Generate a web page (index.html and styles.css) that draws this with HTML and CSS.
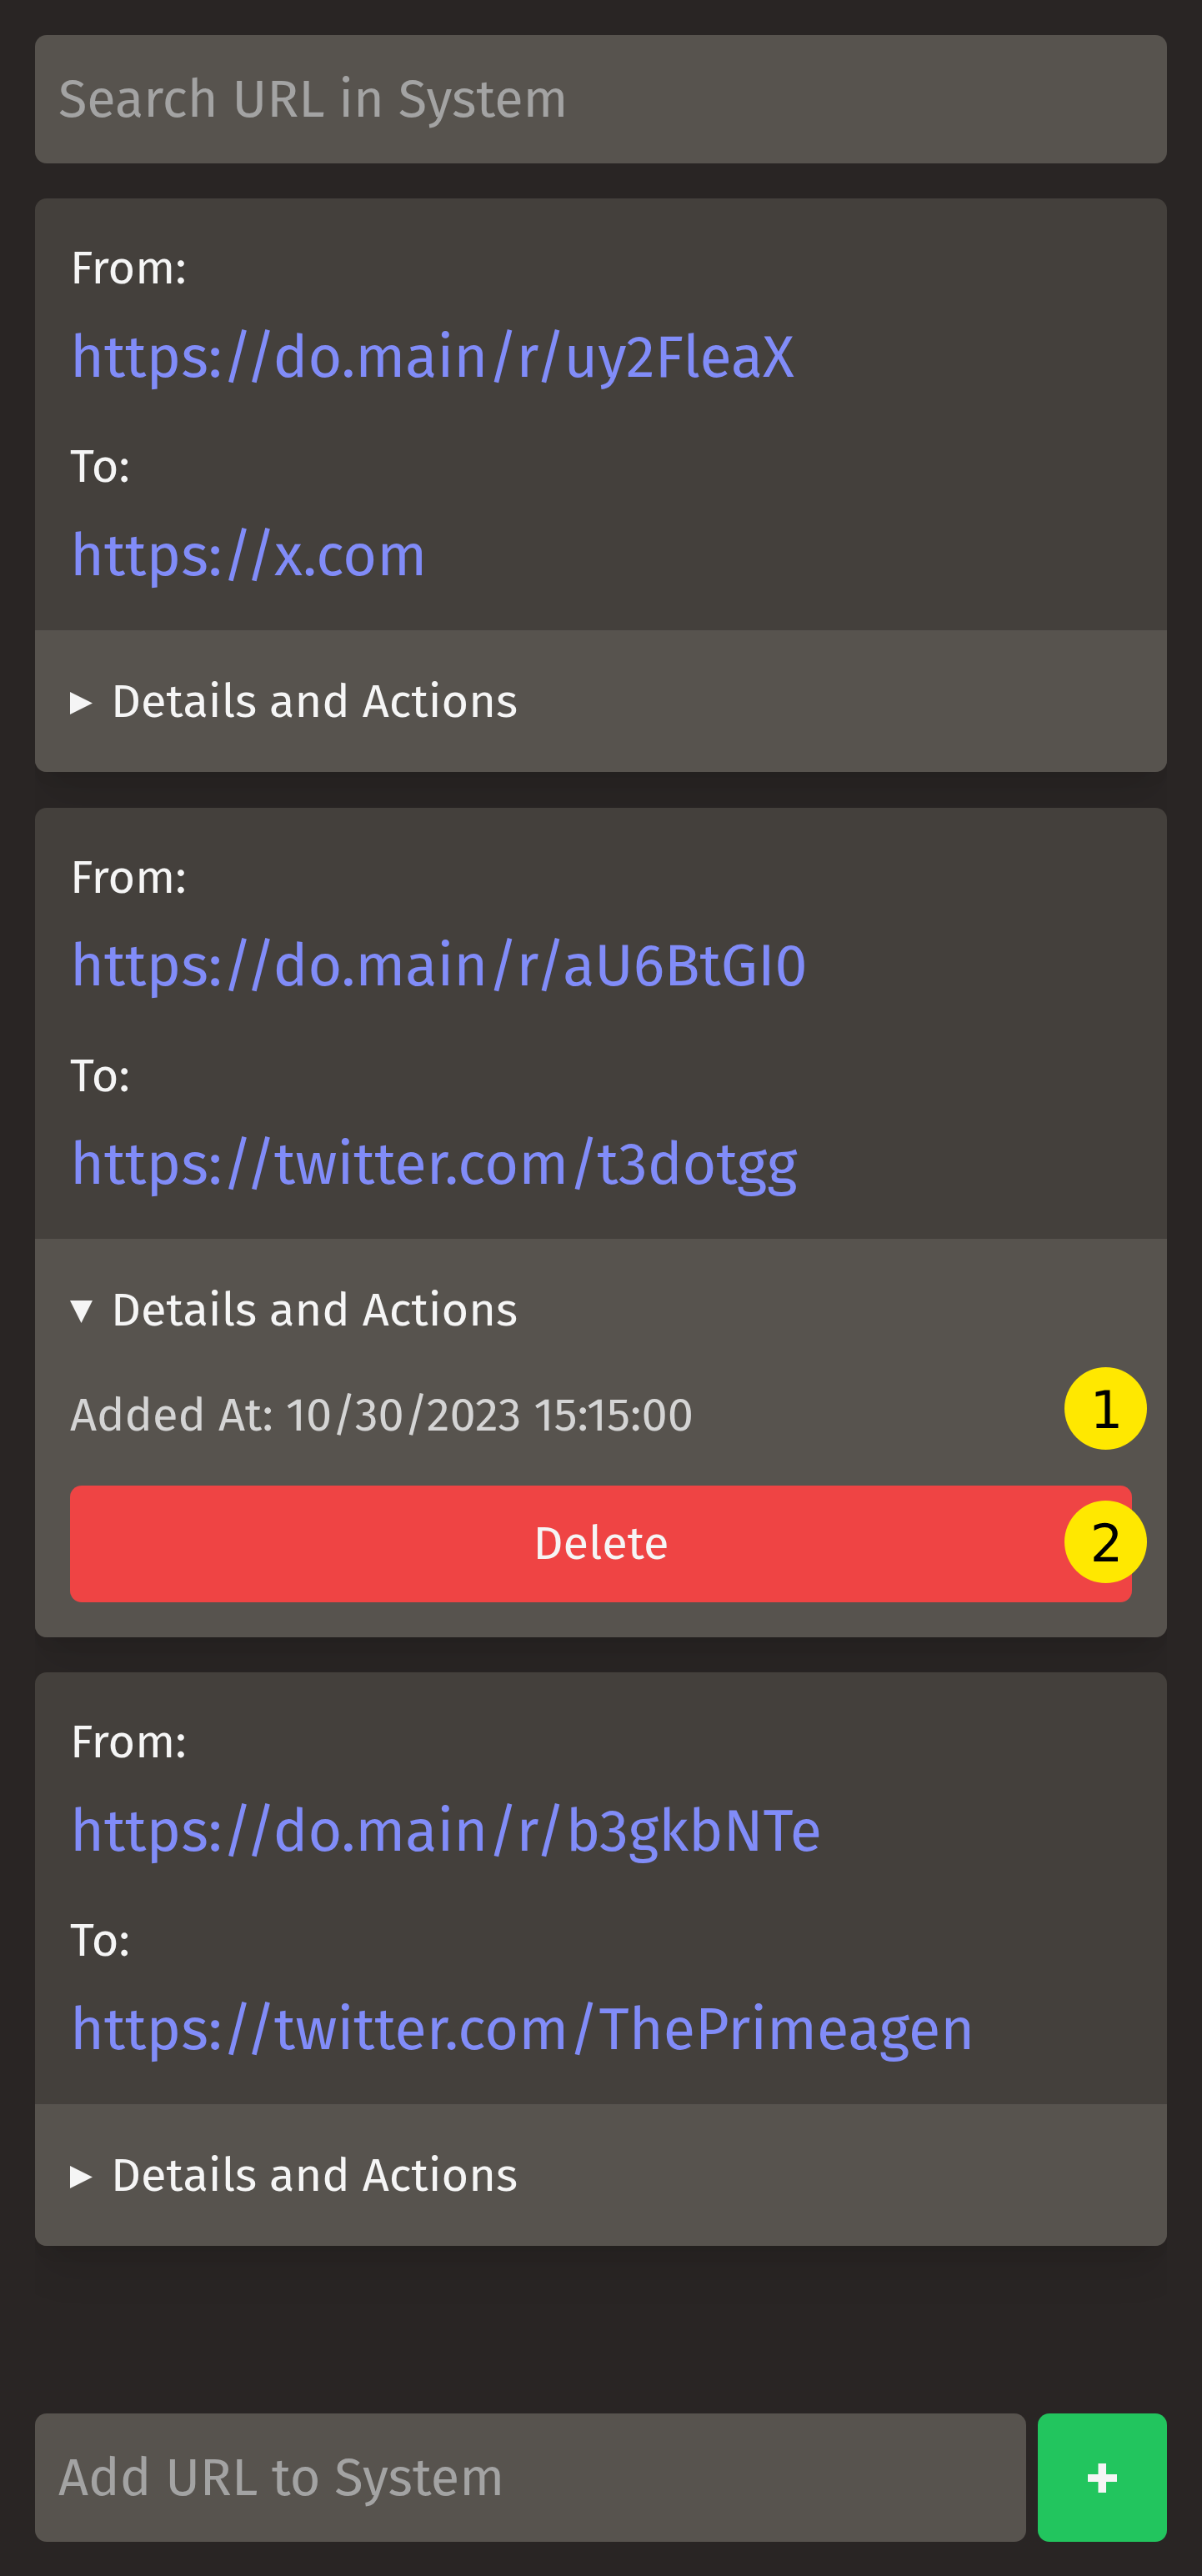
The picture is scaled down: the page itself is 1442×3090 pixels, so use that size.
FILE: index.html
```html
<!DOCTYPE html>
<html lang="en">
<head>
<meta charset="utf-8">
<title>URL System</title>
<link rel="stylesheet" href="styles.css">
</head>
<body>
<main class="app">
  <input class="field" type="text" placeholder="Search URL in System">

  <section class="list">
    <article class="card">
      <div class="card-body">
        <div class="entry"><p class="label">From:</p><a class="link">https://do.main/r/uy2FleaX</a></div>
        <div class="entry"><p class="label">To:</p><a class="link">https://x.com</a></div>
      </div>
      <div class="details">
        <div class="summary">
          <svg class="marker" viewBox="0 0 27 27"><path d="M0 0L27 13.5L0 27Z"/></svg>
          <span>Details and Actions</span>
        </div>
      </div>
    </article>

    <article class="card card-open">
      <div class="card-body">
        <div class="entry"><p class="label">From:</p><a class="link">https://do.main/r/aU6BtGI0</a></div>
        <div class="entry"><p class="label">To:</p><a class="link">https://twitter.com/t3dotgg</a></div>
      </div>
      <div class="details">
        <div class="summary">
          <svg class="marker" viewBox="0 0 27 27"><path d="M0 0H27L13.5 27Z"/></svg>
          <span>Details and Actions</span>
        </div>
        <p class="added">Added At: 10/30/2023 15:15:00</p>
        <button class="delete">Delete</button>
        <span class="badge badge-one">1</span>
        <span class="badge badge-two">2</span>
      </div>
    </article>

    <article class="card">
      <div class="card-body">
        <div class="entry"><p class="label">From:</p><a class="link">https://do.main/r/b3gkbNTe</a></div>
        <div class="entry"><p class="label">To:</p><a class="link">https://twitter.com/ThePrimeagen</a></div>
      </div>
      <div class="details">
        <div class="summary">
          <svg class="marker" viewBox="0 0 27 27"><path d="M0 0L27 13.5L0 27Z"/></svg>
          <span>Details and Actions</span>
        </div>
      </div>
    </article>
  </section>

  <form class="add-row">
    <input class="field" type="text" placeholder="Add URL to System">
    <button class="add" type="button" aria-label="Add">
      <svg class="plus" viewBox="0 0 35 35"><path d="M12.5 0h9.5v13h13v9H22v13h-9.5V22H0v-9h12.5z"/></svg>
    </button>
  </form>
</main>
</body>
</html>
```
FILE: styles.css
```css
* {
  box-sizing: border-box;
}

body {
  margin: 0;
  background: #292524;
  color: #f5f5f5;
  font-family: "Fira Sans", "Open Sans", "Noto Sans", sans-serif;
  font-size: 56px;
  line-height: 84px;
}

p {
  margin: 0;
}

.app {
  display: flex;
  flex-direction: column;
  height: 3090px;
  padding: 42px 42px 41px;
}

.field {
  display: block;
  width: 100%;
  height: 154px;
  padding: 0 28px;
  border: 0;
  border-radius: 14px;
  background: #57534e;
  color: #f5f5f5;
  font-family: inherit;
  font-size: 63px;
}

.field::placeholder {
  color: #a3a3a3;
  opacity: 1;
}

.list {
  display: flex;
  flex: 1;
  flex-direction: column;
  gap: 42px;
  padding-top: 42px;
  overflow: hidden;
}

.card {
  border-radius: 14px;
  background: #44403c;
  box-shadow: 0 35px 52px -10px rgba(0, 0, 0, 0.1), 0 14px 21px -14px rgba(0, 0, 0, 0.1);
}

.card-body {
  display: flex;
  flex-direction: column;
  gap: 40px;
  padding: 42px 42px 40px;
}

.entry {
  display: flex;
  flex-direction: column;
  gap: 16px;
}

.card-open {
  margin-top: 1px;
}

.card-open .card-body {
  gap: 41px;
  padding-top: 41.5px;
  padding-bottom: 40px;
}

.card-open .entry {
  gap: 15px;
}

.link {
  color: #818cf8;
  font-size: 70px;
  line-height: 98px;
  white-space: nowrap;
}

.details {
  position: relative;
  display: flex;
  flex-direction: column;
  gap: 42px;
  padding: 42px;
  border-radius: 0 0 14px 14px;
  background: #57534e;
}

.summary {
  display: flex;
  align-items: center;
  gap: 22px;
  height: 86px;
  padding-top: 2px;
}

.marker {
  width: 27px;
  height: 27px;
  margin-top: 3px;
  fill: #f5f5f5;
}

.added {
  color: #d4d4d4;
}

.delete {
  height: 140px;
  padding: 0;
  border: 0;
  border-radius: 14px;
  background: #ef4444;
  color: #f5f5f5;
  font: inherit;
}

.badge {
  position: absolute;
  right: 24px;
  width: 99px;
  height: 99px;
  border-radius: 50%;
  background: #ffe800;
  color: #000;
  font-family: "DejaVu Sans", sans-serif;
  font-size: 62px;
  line-height: 104px;
  text-align: center;
  text-indent: 2px;
}

.badge-one {
  top: 154.5px;
}

.badge-two {
  top: 314.5px;
  line-height: 103px;
}

.add-row {
  display: flex;
  gap: 14px;
}

.add-row .field {
  flex: 1;
}

.add {
  display: flex;
  align-items: center;
  justify-content: center;
  width: 155px;
  height: 154px;
  padding: 0;
  border: 0;
  border-radius: 14px;
  background: #22c55e;
}

.plus {
  width: 35px;
  height: 35px;
  fill: #f5f5f5;
}
```
